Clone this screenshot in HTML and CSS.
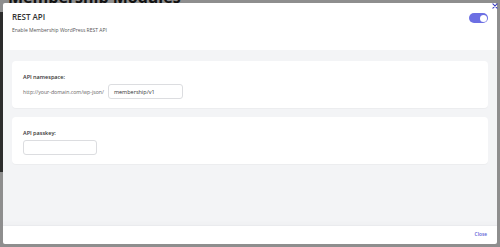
FILE: index.html
```html
<!DOCTYPE html>
<html>
<head>
<meta charset="utf-8">
<link rel="stylesheet" href="styles.css">
</head>
<body>
<div class="page">
  <div class="sidebar"></div>
  <div class="main"><h1 class="page-title">Membership Modules</h1></div>
</div>
<div class="modal">
  <button class="modal-x" aria-label="Close">
    <svg viewBox="0 0 10 10" width="6" height="6"><path d="M1.5 1.5 L8.5 8.5 M8.5 1.5 L1.5 8.5" stroke="#3b3fc4" stroke-width="1.8" stroke-linecap="round"/></svg>
  </button>
  <header class="modal-head">
    <div class="head-text">
      <h2 class="title">REST API</h2>
      <p class="subtitle">Enable Membership WordPress REST API</p>
    </div>
    <span class="toggle"><span class="knob"></span></span>
  </header>
  <section class="modal-body">
    <div class="card">
      <label class="field-label">API namespace:</label>
      <div class="field-row">
        <span class="prefix">http://your-domain.com/wp-json/</span>
        <div class="input">membership/v1</div>
      </div>
    </div>
    <div class="card">
      <label class="field-label">API passkey:</label>
      <div class="field-row">
        <div class="input input-sm"></div>
      </div>
    </div>
  </section>
  <footer class="modal-foot">
    <span class="close-link">Close</span>
  </footer>
</div>
</body>
</html>
```
FILE: styles.css
```css
html, body {
  margin: 0;
  padding: 0;
}
body {
  width: 500px;
  height: 247px;
  overflow: hidden;
  background: #8e8e8e;
  font-family: "Open Sans", "Liberation Sans", sans-serif;
  position: relative;
}
.page {
  display: flex;
  height: 247px;
}
.sidebar {
  width: 3px;
  height: 160px;
  margin-top: 12px;
  background: #2c2c2c;
}
.main {
  padding-left: 5px;
}
.page-title {
  margin: -11px 0 0 0;
  font-size: 16px;
  line-height: 16px;
  font-weight: 700;
  color: #111;
}
.modal {
  position: absolute;
  left: 3px;
  top: 3px;
  width: 494px;
  height: 241px;
  background: #fff;
  display: flex;
  flex-direction: column;
  border-radius: 2px;
}
.modal-x {
  position: absolute;
  right: -2px;
  top: -1px;
  width: 8px;
  height: 8px;
  padding: 0;
  border: 0;
  background: transparent;
  display: flex;
  align-items: center;
  justify-content: center;
}
.modal-head {
  height: 47px;
  box-sizing: border-box;
  padding: 9px 9px 0 9px;
  display: flex;
  justify-content: space-between;
  align-items: flex-start;
}
.title {
  margin: 0;
  font-size: 8px;
  line-height: 10px;
  font-weight: 600;
  color: #333;
}
.subtitle {
  margin: 5px 0 0 0;
  font-size: 5px;
  line-height: 7px;
  color: #555;
}
.toggle {
  width: 19px;
  height: 10px;
  border-radius: 5px;
  background: #6c6fe3;
  margin-top: 1px;
  display: flex;
  align-items: center;
  justify-content: flex-end;
  padding: 0 1.5px;
  box-sizing: border-box;
}
.knob {
  width: 7px;
  height: 7px;
  border-radius: 50%;
  background: #fff;
}
.modal-body {
  flex: 1;
  background: #f3f4f6;
  padding: 11px 9px;
  display: flex;
  flex-direction: column;
  gap: 9px;
  border-bottom: 1px solid #eaebee;
  box-shadow: inset 0 -5px 4px -3px rgba(0,0,0,0.02);
}
.card {
  height: 47px;
  box-sizing: border-box;
  background: #fff;
  border-radius: 4px;
  padding: 13px 11px 0 11px;
  box-shadow: 0 1px 1px rgba(0,0,0,0.03);
}
.field-label {
  display: block;
  font-size: 5.5px;
  line-height: 7px;
  font-weight: 600;
  color: #333;
}
.field-row {
  display: flex;
  align-items: center;
  gap: 4px;
  margin-top: 3px;
}
.prefix {
  font-size: 5.2px;
  color: #666;
}
.input {
  width: 75px;
  height: 15px;
  box-sizing: border-box;
  border: 1px solid #dcdde0;
  border-radius: 3px;
  padding: 0 5px;
  display: flex;
  align-items: center;
  font-size: 5.5px;
  color: #333;
}
.input-sm {
  width: 74px;
}
.modal-foot {
  height: 18px;
  box-sizing: border-box;
  display: flex;
  justify-content: flex-end;
  align-items: center;
  padding: 0 10px 2px 0;
}
.close-link {
  font-size: 4.8px;
  color: #5b5fd6;
  font-weight: 600;
}
```
